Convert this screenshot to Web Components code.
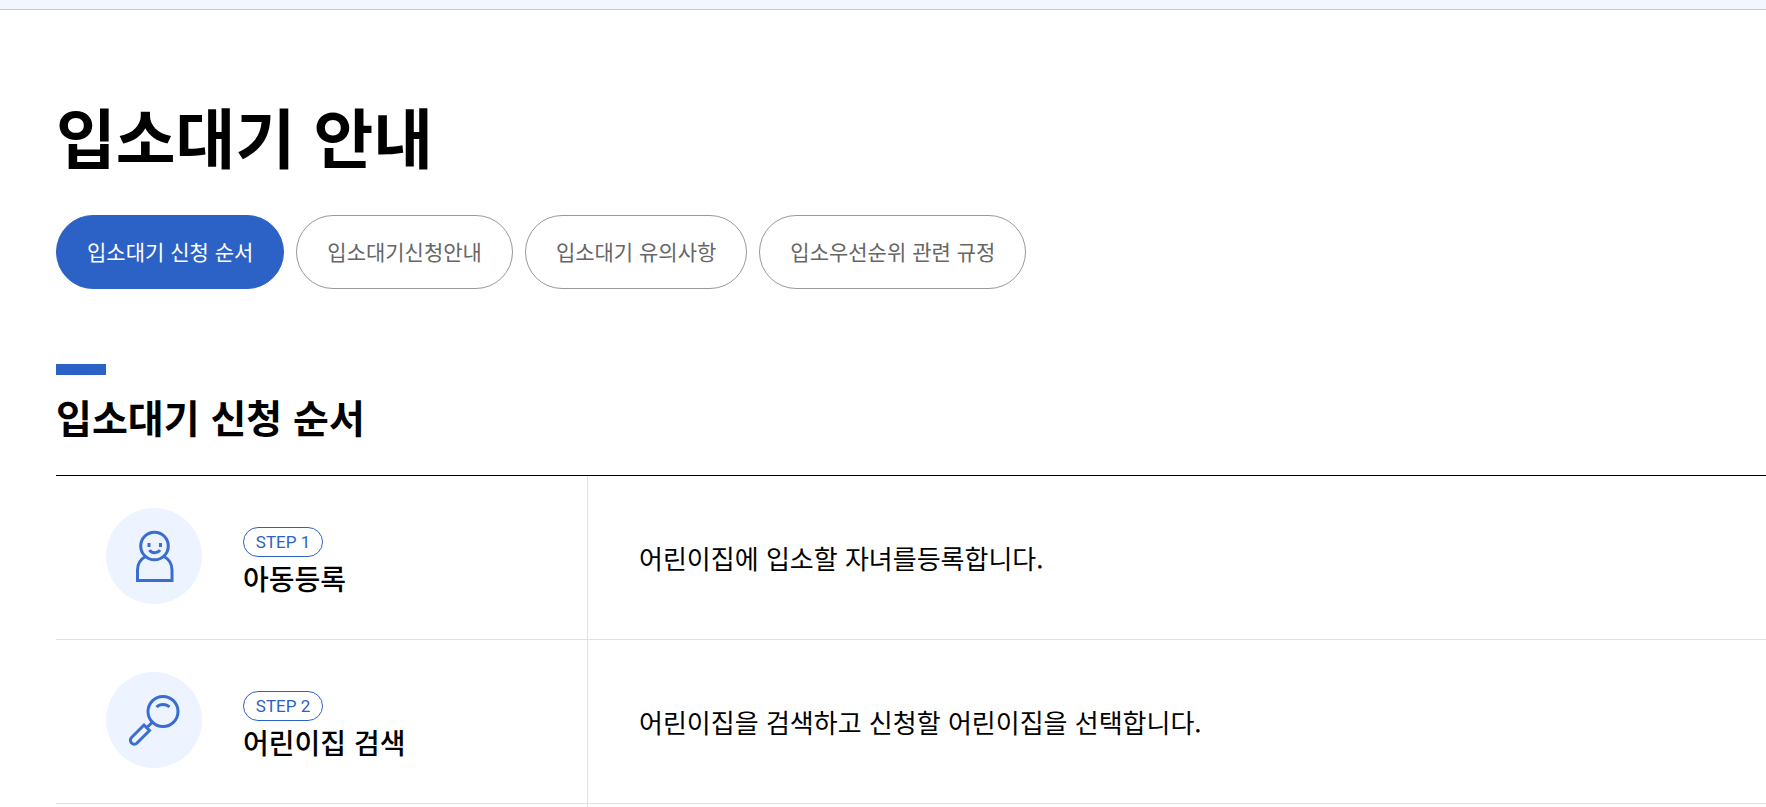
<!DOCTYPE html>
<html lang="ko">
<head>
<meta charset="utf-8">
<title>입소대기 안내</title>
<style>
  :root {
    --primary: #2c62c6;
    --primary-soft: #edf4ff;
    --line: #e1e1e1;
    --text-muted: #666666;
  }

  body {
    margin: 0;
    min-height: 100vh;
    background: #ffffff;
    color: #000000;
    font-family: "Noto Sans CJK KR", sans-serif;
  }
</style>
</head>
<body>
<guide-page></guide-page>

<script>
class TabPills extends HTMLElement {
  constructor() {
    super();
    this.attachShadow({ mode: 'open' });
  }

  connectedCallback() {
    this.shadowRoot.innerHTML = `
      <style>
        :host {
          display: block;
        }

        nav {
          display: flex;
          flex-wrap: wrap;
          gap: 12px;
        }

        ::slotted(a) {
          box-sizing: border-box;
          padding: 0 30px 2px;
          border: 1px solid #999999;
          border-radius: 37px;
          color: var(--text-muted);
          font-size: 21px;
          font-weight: 400;
          line-height: 70px;
          text-decoration: none;
        }

        ::slotted(a[aria-current]) {
          border-color: var(--primary);
          background: var(--primary);
          color: #ffffff;
        }
      </style>
      <nav aria-label="입소대기 안내"><slot></slot></nav>
    `;
  }
}

class SectionTitle extends HTMLElement {
  constructor() {
    super();
    this.attachShadow({ mode: 'open' });
  }

  connectedCallback() {
    this.shadowRoot.innerHTML = `
      <style>
        :host {
          display: block;
        }

        h2 {
          margin: 0;
          font-size: 39px;
          font-weight: 700;
          line-height: 56px;
        }

        h2::before {
          content: "";
          display: block;
          width: 50px;
          height: 11px;
          margin-bottom: 13px;
          background: var(--primary);
        }
      </style>
      <h2><slot></slot></h2>
    `;
  }
}

class StepIcon extends HTMLElement {
  constructor() {
    super();
    this.attachShadow({ mode: 'open' });
  }

  connectedCallback() {
    const shapes = {
      child: `
        <circle cx="48.5" cy="38" r="13.800"/>
        <path d="M39.500 48.500c-5.500 3-8 8-8 13.500V72.500h34.500V62c0-5.500-2.500-10.500-8-13.500"/>
        <path d="M43 35v4M54.500 35v4M43.500 42c2 3.500 8 3.500 10.500 0"/>
      `,
      search: `
        <circle cx="57" cy="39.500" r="15"/>
        <path d="M50.500 35c3.500-3.500 9.500-3.500 13 0M46 50.500l-4.500 4.500"/>
        <path d="M38 53l5.500 5.500-12.500 12.500a3.500 3.500 0 0 1-5.500-5.500z"/>
      `
    };

    this.shadowRoot.innerHTML = `
      <style>
        :host {
          display: block;
          flex: none;
          width: 96px;
          height: 96px;
          border-radius: 50%;
          background: var(--primary-soft);
        }

        svg {
          display: block;
          fill: none;
          stroke: #3a6dd0;
          stroke-width: 3;
        }
      </style>
      <svg viewBox="0 0 96 96" aria-hidden="true">${shapes[this.getAttribute('name')]}</svg>
    `;
  }
}

class StepTable extends HTMLElement {
  constructor() {
    super();
    this.attachShadow({ mode: 'open' });
    this.steps = [
      { icon: 'child', title: '아동등록', text: '어린이집에 입소할 자녀를등록합니다.' },
      { icon: 'search', title: '어린이집 검색', text: '어린이집을 검색하고 신청할 어린이집을 선택합니다.' }
    ];
  }

  connectedCallback() {
    this.shadowRoot.innerHTML = `
      <style>
        :host {
          display: block;
        }

        table {
          width: 100%;
          border-top: 1px solid #000000;
          border-spacing: 0;
          table-layout: fixed;
        }

        .step-col {
          width: 532px;
        }

        th,
        td {
          padding: 0;
          border-bottom: 1px solid var(--line);
          text-align: left;
        }

        th {
          border-right: 1px solid var(--line);
        }

        .step {
          display: flex;
          gap: 41px;
          padding: 32px 50px 35px;
        }

        .badge {
          display: block;
          box-sizing: border-box;
          width: fit-content;
          min-width: 80px;
          margin-top: 19px;
          border: 1px solid var(--primary);
          border-radius: 15px;
          color: var(--primary);
          font-family: Roboto, sans-serif;
          font-size: 17px;
          font-weight: 400;
          line-height: 28px;
          text-align: center;
        }

        .name {
          display: block;
          font-size: 28px;
          font-weight: 500;
          line-height: 42px;
        }

        td {
          padding: 0 51px;
          font-size: 26px;
          font-weight: 400;
          line-height: 40px;
        }

        .more th,
        .more td {
          height: 3px;
          border-bottom: 0;
        }
      </style>
      <table aria-label="입소대기 신청 순서">
        <colgroup><col class="step-col"><col></colgroup>
        <tbody>
          ${this.steps.map((step, i) => `
            <tr>
              <th scope="row">
                <div class="step">
                  <step-icon name="${step.icon}"></step-icon>
                  <div>
                    <span class="badge">STEP ${i + 1}</span>
                    <span class="name">${step.title}</span>
                  </div>
                </div>
              </th>
              <td>${step.text}</td>
            </tr>
          `).join('')}
          <tr class="more"><th></th><td></td></tr>
        </tbody>
      </table>
    `;
  }
}

class GuidePage extends HTMLElement {
  constructor() {
    super();
    this.attachShadow({ mode: 'open' });
  }

  connectedCallback() {
    this.shadowRoot.innerHTML = `
      <style>
        :host {
          display: block;
        }

        header {
          height: 9px;
          border-bottom: 1px solid #b9cbf7;
          background: #f1f6ff;
        }

        main {
          padding: 77px 0 0 56px;
        }

        h1 {
          margin: 0;
          font-size: 65px;
          font-weight: 700;
          line-height: 96px;
        }

        tab-pills {
          margin-top: 32px;
        }

        section-title {
          margin-top: 75px;
        }

        step-table {
          margin-top: 31px;
        }
      </style>
      <header></header>
      <main>
        <h1>입소대기 안내</h1>
        <tab-pills>
          <a href="#order" aria-current="page">입소대기 신청 순서</a>
          <a href="#guide">입소대기신청안내</a>
          <a href="#notice">입소대기 유의사항</a>
          <a href="#rules">입소우선순위 관련 규정</a>
        </tab-pills>
        <section-title id="order">입소대기 신청 순서</section-title>
        <step-table></step-table>
      </main>
    `;
  }
}

customElements.define('tab-pills', TabPills);
customElements.define('section-title', SectionTitle);
customElements.define('step-icon', StepIcon);
customElements.define('step-table', StepTable);
customElements.define('guide-page', GuidePage);
</script>
</body>
</html>
